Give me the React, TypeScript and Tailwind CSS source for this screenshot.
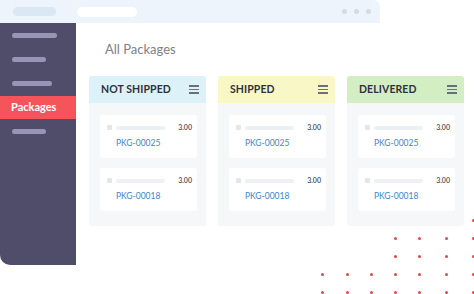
import React from 'react';

type Column = {
  title: string;
  headerBg: string;
};

const columns: Column[] = [
  { title: 'NOT SHIPPED', headerBg: 'bg-[#dcf1f8]' },
  { title: 'SHIPPED', headerBg: 'bg-[#faf7c6]' },
  { title: 'DELIVERED', headerBg: 'bg-[#d3eec2]' },
];

const packages = ['PKG-00025', 'PKG-00018'];

// dot rows: which columns (0..6) are filled
const dotRows: number[][] = [
  [6],
  [3, 4, 5, 6],
  [3, 4, 5, 6],
  [0, 1, 2, 3, 4, 5, 6],
  [0, 1, 2, 3, 4, 5, 6],
];
const dotX = [322, 347, 371, 395, 419, 446, 473];

function Hamburger() {
  return (
    <div className="flex flex-col gap-[2px] w-[10px]">
      <span className="h-[1.5px] bg-[#6b6f7a]" />
      <span className="h-[1.5px] bg-[#6b6f7a]" />
      <span className="h-[1.5px] bg-[#6b6f7a]" />
    </div>
  );
}

function PackageCard({ code }: { code: string }) {
  return (
    <div className="h-[43px] bg-white rounded-[3px] pl-[7px] pr-[5px] pt-[9px]">
      <div className="flex items-center">
        <span className="w-[5px] h-[5px] bg-[#e4e6ea] rounded-[1px]" />
        <span className="ml-[4px] w-[49px] h-[4px] bg-[#edf0f5] rounded-full" />
        <span className="ml-auto text-[7px] leading-none text-[#4a4d55] font-semibold">
          3.00
        </span>
      </div>
      <div className="mt-[8px] pl-[9px] text-[8.5px] leading-none text-[#3d86d3]">
        {code}
      </div>
    </div>
  );
}

function StatusColumn({ column }: { column: Column }) {
  return (
    <div className="w-[117px] flex flex-col rounded-[3px] overflow-hidden">
      <div
        className={`${column.headerBg} h-[27px] flex items-center justify-between pl-[12px] pr-[7px]`}
      >
        <span className="text-[10.5px] font-bold text-[#2f323a] tracking-[0.1px]">
          {column.title}
        </span>
        <Hamburger />
      </div>
      <div className="bg-[#f6f7f9] pl-[11px] pr-[9px] pt-[12px] pb-[15px] flex flex-col gap-[10px]">
        {packages.map((code) => (
          <PackageCard key={code} code={code} />
        ))}
      </div>
    </div>
  );
}

export default function App() {
  return (
    <div
      className="relative w-[474px] h-[294px] overflow-hidden bg-white"
      style={{ fontFamily: '"Lato", "Open Sans", sans-serif' }}
    >
      {/* browser bar */}
      <div className="w-[380px] h-[23px] bg-[#eef4fb] rounded-tr-[7px] flex items-center">
        <span className="ml-[13px] w-[43px] h-[9px] rounded-full bg-[#dbe7f2]" />
        <span className="ml-[21px] w-[60px] h-[10px] rounded-full bg-white" />
        <div className="ml-auto mr-[9px] flex gap-[7px]">
          <span className="w-[5px] h-[5px] rounded-full bg-[#d5dbe3]" />
          <span className="w-[5px] h-[5px] rounded-full bg-[#d5dbe3]" />
          <span className="w-[5px] h-[5px] rounded-full bg-[#d5dbe3]" />
        </div>
      </div>

      <div className="flex">
        {/* sidebar */}
        <div className="w-[76px] h-[242px] bg-[#4f4d6a] rounded-bl-[10px] flex flex-col pt-[10px]">
          <span className="ml-[12px] w-[45px] h-[5px] rounded-full bg-[#9896b6]" />
          <span className="ml-[12px] mt-[19px] w-[34px] h-[5px] rounded-full bg-[#9896b6]" />
          <span className="ml-[12px] mt-[19px] w-[40px] h-[5px] rounded-full bg-[#9896b6]" />
          <div className="mt-[10px] h-[23px] bg-[#f5545a] flex items-center pl-[11px]">
            <span className="text-[11px] font-bold text-white">Packages</span>
          </div>
          <span className="ml-[12px] mt-[10px] w-[34px] h-[5px] rounded-full bg-[#9896b6]" />
        </div>

        {/* main */}
        <div className="flex-1 pl-[13px]">
          <div className="pl-[16px] pt-[20px] text-[13px] leading-none text-[#7d818c]">
            All Packages
          </div>
          <div className="mt-[20px] flex gap-[12px]">
            {columns.map((c) => (
              <StatusColumn key={c.title} column={c} />
            ))}
          </div>
        </div>
      </div>

      {/* decorative dots */}
      {dotRows.map((row, r) =>
        row.map((c) => (
          <span
            key={`${r}-${c}`}
            className="absolute w-[2.5px] h-[2.5px] rounded-full bg-[#e0474c]"
            style={{ left: dotX[c] - 1, top: 219 + r * 18 }}
          />
        ))
      )}
    </div>
  );
}
